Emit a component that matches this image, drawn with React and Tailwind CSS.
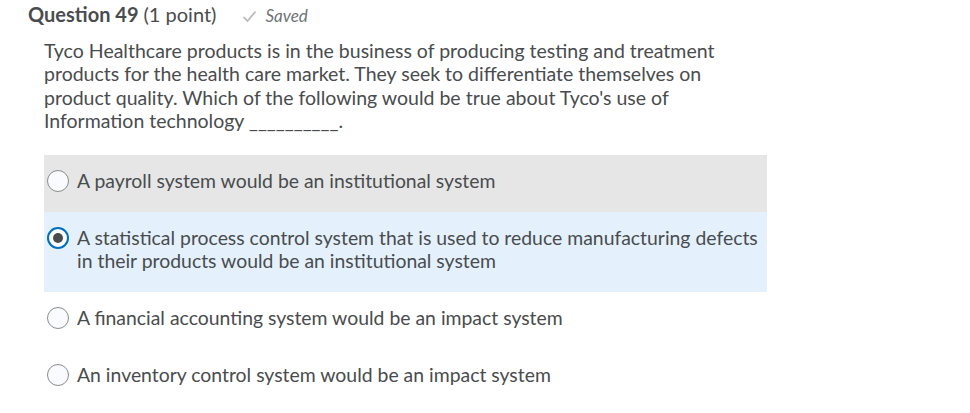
import React from "react";

function Radio({ checked }) {
  return checked ? (
    <span className="mt-[1px] flex h-[22px] w-[22px] shrink-0 items-center justify-center rounded-full border-[2px] border-[#006fbf] bg-white">
      <span className="h-[10px] w-[10px] rounded-full bg-[#494c4e]" />
    </span>
  ) : (
    <span className="mt-[1px] h-[22px] w-[22px] shrink-0 rounded-full border border-[#8a8c8e] bg-[#f9fbff]" />
  );
}

const options = [
  { text: "A payroll system would be an institutional system", bg: "bg-[#e6e6e6]" },
  {
    text: "A statistical process control system that is used to reduce manufacturing defects in their products would be an institutional system",
    bg: "bg-[#e4f1fc]",
    checked: true,
  },
  { text: "A financial accounting system would be an impact system", bg: "" },
  { text: "An inventory control system would be an impact system", bg: "" },
];

export default function App() {
  return (
    <div className="h-[413px] w-[970px] overflow-hidden bg-white text-[#494c4e]" style={{ fontFamily: "Lato, 'Open Sans', sans-serif" }}>
      <div className="flex h-[28px] items-baseline pl-[28px] leading-[28px]">
        <span className="text-[20px] font-bold">Question 49</span>
        <span className="ml-[5px] text-[20px]">(1 point)</span>
        <span className="ml-[26px] flex items-baseline text-[17px] italic text-[#6e7376]">
          <svg width="15" height="13" viewBox="0 0 15 13" className="mr-[8px] self-center">
            <path d="M1.5 7 L5.5 11 L13.5 1.5" fill="none" stroke="#b5b7b9" strokeWidth="1.7" />
          </svg>
          Saved
        </span>
      </div>
      <p className="ml-[44px] mt-[11px] w-[700px] text-[19.5px] leading-[23.3px]">
        Tyco Healthcare products is in the business of producing testing and treatment products for the health care market. They seek to differentiate themselves on product quality. Which of the following would be true about Tyco's use of Information technology __________.
      </p>
      <div className="ml-[44px] mt-[23px] w-[723px]">
        {options.map((o, i) => (
          <div key={i} className={`flex items-start gap-[8px] pb-[20px] pt-[14px] pl-[3px] pr-[2px] ${o.bg}`}>
            <Radio checked={o.checked} />
            <span className="text-[19.4px] leading-[23px]">{o.text}</span>
          </div>
        ))}
      </div>
    </div>
  );
}
